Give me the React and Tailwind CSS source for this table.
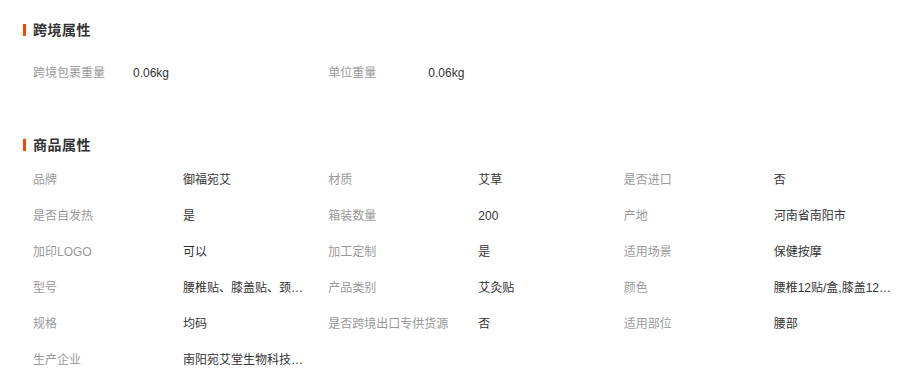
const font = { fontFamily: '"Liberation Sans", "Noto Sans CJK SC", sans-serif' };

const crossBorder = [
  ["跨境包裹重量", "0.06kg"],
  ["单位重量", "0.06kg"],
];

const goods = [
  ["品牌", "御福宛艾"],
  ["材质", "艾草"],
  ["是否进口", "否"],
  ["是否自发热", "是"],
  ["箱装数量", "200"],
  ["产地", "河南省南阳市"],
  ["加印LOGO", "可以"],
  ["加工定制", "是"],
  ["适用场景", "保健按摩"],
  ["型号", "腰椎贴、膝盖贴、颈椎贴、肩周贴"],
  ["产品类别", "艾灸贴"],
  ["颜色", "腰椎12贴/盒,膝盖12贴/盒,颈椎12贴/盒"],
  ["规格", "均码"],
  ["是否跨境出口专供货源", "否"],
  ["适用部位", "腰部"],
  ["生产企业", "南阳宛艾堂生物科技有限公司"],
];

function Heading({ children }) {
  return (
    <div className="flex items-center h-4 -ml-[10px]">
      <span className="w-[3px] h-3 bg-[#ff4400] mr-[7px]" />
      <span className="text-[14px] leading-4 font-bold text-[#333] tracking-[0.5px]">{children}</span>
    </div>
  );
}

export default function App() {
  return (
    <div className="w-[919px] h-[380px] bg-white pl-[33px] text-[12px]" style={font}>
      <div className="pt-[22px]">
        <Heading>跨境属性</Heading>
        <div className="grid grid-cols-3 mt-[17px]">
          {crossBorder.map(([k, v]) => (
            <div key={k} className="flex items-center h-9">
              <span className="w-[100px] text-[#999]">{k}</span>
              <span className="text-[#333]">{v}</span>
            </div>
          ))}
        </div>
      </div>

      <div className="mt-[46px]">
        <Heading>商品属性</Heading>
        <div className="grid grid-cols-3 mt-[9px]">
          {goods.map(([k, v]) => (
            <div key={k} className="flex items-center h-9">
              <span className="w-[150px] shrink-0 text-[#999] whitespace-nowrap">{k}</span>
              <span className="w-[124px] shrink-0 text-[#333] whitespace-nowrap overflow-hidden text-ellipsis">{v}</span>
            </div>
          ))}
        </div>
      </div>
    </div>
  );
}
